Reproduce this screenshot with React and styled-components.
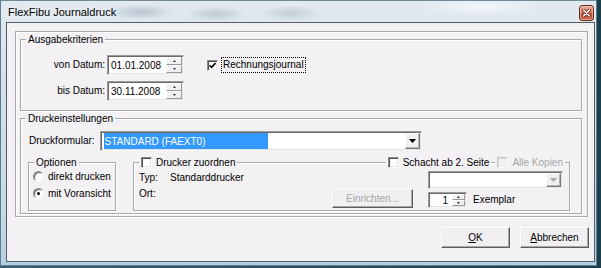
import React from 'react';
import styled, { createGlobalStyle } from 'styled-components';

const GlobalStyle = createGlobalStyle`
  html, body { margin: 0; padding: 0; }
  body {
    width: 601px; height: 268px; overflow: hidden;
    background: #24495a;
    font-family: "Liberation Sans", Arial, sans-serif;
    font-size: 10px;
    color: #000;
  }
  #root { width: 601px; height: 268px; }
`;

const BG = '#f3f1f4';

const Desktop = styled.div`
  width: 601px;
  height: 268px;
  display: flex;
  align-items: flex-start;
  background: linear-gradient(90deg, #3a6070 0%, #1d3f4c 100%);
`;

const Window = styled.div`
  box-sizing: border-box;
  width: 597px;
  height: 266px;
  display: flex;
  flex-direction: column;
  padding: 0 1px 3px 5px;
  border: 1px solid #5b7f90;
  border-top-color: #6f8a9a;
  background:
    radial-gradient(ellipse 34px 8px at 140px 11px, rgba(110, 130, 150, 0.35), transparent),
    radial-gradient(ellipse 30px 8px at 215px 13px, rgba(110, 130, 150, 0.3), transparent),
    radial-gradient(ellipse 30px 8px at 290px 12px, rgba(110, 130, 150, 0.28), transparent),
    radial-gradient(ellipse 60px 10px at 480px 6px, rgba(255, 255, 255, 0.55), transparent),
    linear-gradient(180deg, #e2eaf0 0%, #d3e0ea 35%, #c6d9e7 80%, #b3d0e3 100%);
`;

const TitleBar = styled.div`
  height: 21px;
  flex: none;
  display: flex;
  align-items: flex-start;
  justify-content: space-between;
  padding-left: 2px;
`;

const Title = styled.span`
  font-size: 11px;
  line-height: 13px;
  margin-top: 5px;
  color: #000;
  text-shadow: 0 0 6px rgba(255, 255, 255, 0.9);
`;

const CloseButton = styled.div`
  box-sizing: border-box;
  width: 15px;
  height: 16px;
  margin: 4px 1px 0 0;
  border-radius: 3px;
  border: 1px solid #6a2a1e;
  background: linear-gradient(180deg, #eab0a0 0%, #d77a62 45%, #c24d2f 55%, #d0694c 100%);
  display: flex;
  align-items: center;
  justify-content: center;
  box-shadow: inset 0 0 0 1px rgba(255, 220, 210, 0.5);
`;

const Client = styled.div`
  flex: 1;
  display: flex;
  flex-direction: column;
  border: 1px solid #555b63;
  background: ${BG};
  padding: 8px 5px 0 8px;
`;

const Panel = styled.div`
  box-sizing: border-box;
  width: 573px;
  height: 186px;
  display: flex;
  flex-direction: column;
  gap: 7px;
  padding: 7px 5px 2px 4px;
  border: 1px solid #a9a8ac;
  box-shadow: inset 1px 1px 0 #fff, 1px 1px 0 #fff;
`;

const Group = styled.div`
  box-sizing: border-box;
  display: flex;
  flex-direction: column;
  flex: none;
  height: ${(p) => p.$h}px;
  ${(p) => (p.$w ? `width: ${p.$w}px;` : '')}
  border: 1px solid #a9a8ac;
  box-shadow: inset 1px 1px 0 #fff, 1px 1px 0 #fff;
`;

const Header = styled.div`
  display: flex;
  align-items: center;
  justify-content: space-between;
  height: 13px;
  margin-top: -7px;
  padding: 0 ${(p) => p.$pr || 0}px 0 ${(p) => p.$pl}px;
`;

const Legend = styled.span`
  display: inline-flex;
  align-items: center;
  gap: 4px;
  height: 13px;
  line-height: 13px;
  padding: 0 2px;
  background: ${BG};
  white-space: nowrap;
  color: ${(p) => (p.$disabled ? '#a6a6a6' : '#000')};
`;

const LegendGroup = styled.div`
  display: flex;
  gap: 4px;
`;

const DateGrid = styled.div`
  display: grid;
  grid-template-columns: 84px 77px auto;
  column-gap: 2px;
  row-gap: 6px;
  align-items: center;
  margin-top: 9px;
`;

const Label = styled.span`
  text-align: ${(p) => p.$align || 'left'};
  white-space: nowrap;
  line-height: 12px;
  color: ${(p) => (p.$disabled ? '#a6a6a6' : '#000')};
`;

const Field = styled.div`
  box-sizing: border-box;
  width: ${(p) => p.$w}px;
  height: ${(p) => p.$h}px;
  flex: none;
  display: flex;
  align-items: stretch;
  padding: 1px;
  background: #fff;
  border: 1px solid;
  border-color: #9c9c9c #f6f6f6 #f6f6f6 #9c9c9c;
  box-shadow: inset 1px 1px 0 #6a6a6a, inset -1px -1px 0 #e2e2e2;
`;

const FieldText = styled.span`
  flex: 1;
  display: flex;
  align-items: center;
  justify-content: ${(p) => (p.$right ? 'flex-end' : 'flex-start')};
  padding: ${(p) => (p.$right ? '0 4px 0 0' : '0 0 0 2px')};
  white-space: nowrap;
`;

const SpinButtons = styled.div`
  width: ${(p) => p.$w || 16}px;
  display: flex;
  flex-direction: column;
  flex: none;
`;

const SpinHalf = styled.div`
  box-sizing: border-box;
  flex: 1;
  display: flex;
  align-items: center;
  justify-content: center;
  background: #f0eff1;
  border: 1px solid;
  border-color: #fdfdfd #9a9a9a #9a9a9a #fdfdfd;
`;

const DropButton = styled.div`
  box-sizing: border-box;
  width: 15px;
  flex: none;
  margin-left: auto;
  display: flex;
  align-items: center;
  justify-content: center;
  background: #f0eff1;
  border: 1px solid;
  border-color: #fdfdfd #7a7a7a #7a7a7a #fdfdfd;
  box-shadow: inset -1px -1px 0 #b4b4b4;
`;

const Selection = styled.span`
  width: 163px;
  margin-left: 2px;
  display: flex;
  align-items: center;
  padding-left: 1px;
  background: #3399ff;
  color: #fff;
  white-space: nowrap;
`;

const CheckCell = styled.div`
  display: flex;
  align-items: center;
  gap: 3px;
  padding-left: 21px;
`;

const Focus = styled.span`
  border: 1px dotted #000;
  padding: 1px 1px;
  line-height: 12px;
`;

const Box = styled.span`
  box-sizing: border-box;
  width: 11px;
  height: 11px;
  flex: none;
  display: inline-flex;
  align-items: center;
  justify-content: center;
  background: ${(p) => (p.$disabled ? '#f1f0f2' : '#fff')};
  border: 1px solid;
  border-color: ${(p) => (p.$disabled ? '#c8c8c8 #fafafa #fafafa #c8c8c8' : '#8a8a8a #fafafa #fafafa #8a8a8a')};
  box-shadow: ${(p) => (p.$disabled ? 'inset 1px 1px 0 #dadada' : 'inset 1px 1px 0 #505050, inset -1px -1px 0 #e4e4e4')};
`;

const RadioCircle = styled.span`
  box-sizing: border-box;
  width: 11px;
  height: 11px;
  flex: none;
  border-radius: 50%;
  display: inline-flex;
  align-items: center;
  justify-content: center;
  background: #fff;
  border: 1px solid;
  border-color: #8a8a8a #f4f4f4 #f4f4f4 #8a8a8a;
  box-shadow: inset 1px 1px 0 #6a6a6a;
  &::after {
    content: '';
    width: 3px;
    height: 3px;
    border-radius: 50%;
    background: #000;
    display: ${(p) => (p.$checked ? 'block' : 'none')};
  }
`;

const FormRow = styled.div`
  display: flex;
  align-items: center;
  gap: 5px;
  margin: 6px 0 0 8px;
`;

const SubRow = styled.div`
  display: flex;
  gap: 17px;
  margin: 11px 0 0 7px;
`;

const RadioList = styled.div`
  display: flex;
  flex-direction: column;
  gap: 4px;
  margin-top: 1px;
  padding-left: 4px;
`;

const RadioRow = styled.label`
  display: flex;
  align-items: center;
  gap: 4px;
  height: 13px;
  line-height: 13px;
`;

const DruckerBody = styled.div`
  display: flex;
  padding: 2px 6px 0 5px;
`;

const Info = styled.div`
  flex: 1;
  display: grid;
  grid-template-columns: 31px auto;
  grid-auto-rows: 12px;
  row-gap: 4px;
  padding-top: 1px;
  align-content: start;
`;

const RightCol = styled.div`
  width: 135px;
  flex: none;
  display: flex;
  flex-direction: column;
  gap: 3px;
`;

const CopiesRow = styled.div`
  display: flex;
  align-items: center;
  gap: 6px;
`;

const Button = styled.div`
  box-sizing: border-box;
  width: ${(p) => p.$w}px;
  height: ${(p) => p.$h}px;
  flex: none;
  display: flex;
  align-items: center;
  justify-content: center;
  background: #f1eff2;
  border: 1px solid;
  border-color: #fdfdfd #5c5c5c #5c5c5c #fdfdfd;
  box-shadow: inset -1px -1px 0 #a8a8a8, inset 1px 1px 0 #ececec;
  color: ${(p) => (p.$disabled ? '#a6a6a6' : '#000')};
  white-space: nowrap;
  margin-top: ${(p) => p.$mt || 0}px;
  margin-right: ${(p) => p.$mr || 0}px;
`;

const ButtonRow = styled.div`
  display: flex;
  justify-content: flex-end;
  gap: 10px;
  margin-top: 10px;
`;

const Arrow = ({ dir = 'down', color = '#000', w = 5, h = 3 }) => (
  <svg width={w} height={h} viewBox={`0 0 ${w} ${h}`} style={{ display: 'block' }}>
    {dir === 'down' ? (
      <polygon points={`0,0 ${w},0 ${w / 2},${h}`} fill={color} />
    ) : (
      <polygon points={`0,${h} ${w},${h} ${w / 2},0`} fill={color} />
    )}
  </svg>
);

const Check = () => (
  <svg width="7" height="7" viewBox="0 0 7 7" style={{ display: 'block' }}>
    <polyline points="0.5,3.2 2.6,5.3 6.5,1" fill="none" stroke="#000" strokeWidth="1.6" />
  </svg>
);

const CheckBox = ({ checked, disabled }) => (
  <Box $disabled={disabled}>{checked && <Check />}</Box>
);

const Spin = ({ value, w, h, right, btnW }) => (
  <Field $w={w} $h={h}>
    <FieldText $right={right}>{value}</FieldText>
    <SpinButtons $w={btnW}>
      <SpinHalf>
        <Arrow dir="up" w={3} h={2} color="#333" />
      </SpinHalf>
      <SpinHalf>
        <Arrow dir="down" w={3} h={2} color="#333" />
      </SpinHalf>
    </SpinButtons>
  </Field>
);

const Underline = styled.span`
  text-decoration: underline;
`;

export default function App() {
  return (
    <>
      <GlobalStyle />
      <Desktop>
        <Window>
          <TitleBar>
            <Title>FlexFibu Journaldruck</Title>
            <CloseButton>
              <svg width="9" height="8" viewBox="0 0 9 8">
                <path d="M1.5 1 L7.5 7 M7.5 1 L1.5 7" stroke="#5a1e14" strokeWidth="3" strokeLinecap="round" />
                <path d="M1.5 1 L7.5 7 M7.5 1 L1.5 7" stroke="#fff" strokeWidth="1.6" strokeLinecap="round" />
              </svg>
            </CloseButton>
          </TitleBar>
          <Client>
            <Panel>
              <Group $h={72}>
                <Header $pl={5}>
                  <Legend>Ausgabekriterien</Legend>
                </Header>
                <DateGrid>
                  <Label $align="right">von Datum:</Label>
                  <Spin value="01.01.2008" w={77} h={20} />
                  <CheckCell>
                    <CheckBox checked />
                    <Focus>Rechnungsjournal</Focus>
                  </CheckCell>
                  <Label $align="right">bis Datum:</Label>
                  <Spin value="30.11.2008" w={77} h={20} />
                  <span />
                </DateGrid>
              </Group>
              <Group $h={96}>
                <Header $pl={5}>
                  <Legend>Druckeinstellungen</Legend>
                </Header>
                <FormRow>
                  <Label>Druckformular:</Label>
                  <Field $w={322} $h={20}>
                    <Selection>STANDARD (FAEXT0)</Selection>
                    <DropButton>
                      <Arrow w={7} h={4} />
                    </DropButton>
                  </Field>
                </FormRow>
                <SubRow>
                  <Group $w={88} $h={49}>
                    <Header $pl={5}>
                      <Legend>Optionen</Legend>
                    </Header>
                    <RadioList>
                      <RadioRow>
                        <RadioCircle />
                        direkt drucken
                      </RadioRow>
                      <RadioRow>
                        <RadioCircle $checked />
                        mit Voransicht
                      </RadioRow>
                    </RadioList>
                  </Group>
                  <Group $w={437} $h={49}>
                    <Header $pl={5} $pr={4}>
                      <Legend>
                        <CheckBox />
                        Drucker zuordnen
                      </Legend>
                      <LegendGroup>
                        <Legend>
                          <CheckBox />
                          Schacht ab 2. Seite
                        </Legend>
                        <Legend $disabled>
                          <CheckBox disabled />
                          Alle Kopien
                        </Legend>
                      </LegendGroup>
                    </Header>
                    <DruckerBody>
                      <Info>
                        <Label>Typ:</Label>
                        <Label>Standarddrucker</Label>
                        <Label>Ort:</Label>
                        <Label />
                      </Info>
                      <Button $w={81} $h={19} $mt={18} $mr={15} $disabled>
                        Einrichten...
                      </Button>
                      <RightCol>
                        <Field $w={135} $h={18}>
                          <DropButton>
                            <Arrow w={7} h={4} color="#a8a8a8" />
                          </DropButton>
                        </Field>
                        <CopiesRow>
                          <Spin value="1" w={39} h={16} right btnW={13} />
                          <Label>Exemplar</Label>
                        </CopiesRow>
                      </RightCol>
                    </DruckerBody>
                  </Group>
                </SubRow>
              </Group>
            </Panel>
            <ButtonRow>
              <Button $w={69} $h={21}>
                <Underline>O</Underline>K
              </Button>
              <Button $w={69} $h={21}>
                <Underline>A</Underline>bbrechen
              </Button>
            </ButtonRow>
          </Client>
        </Window>
      </Desktop>
    </>
  );
}
